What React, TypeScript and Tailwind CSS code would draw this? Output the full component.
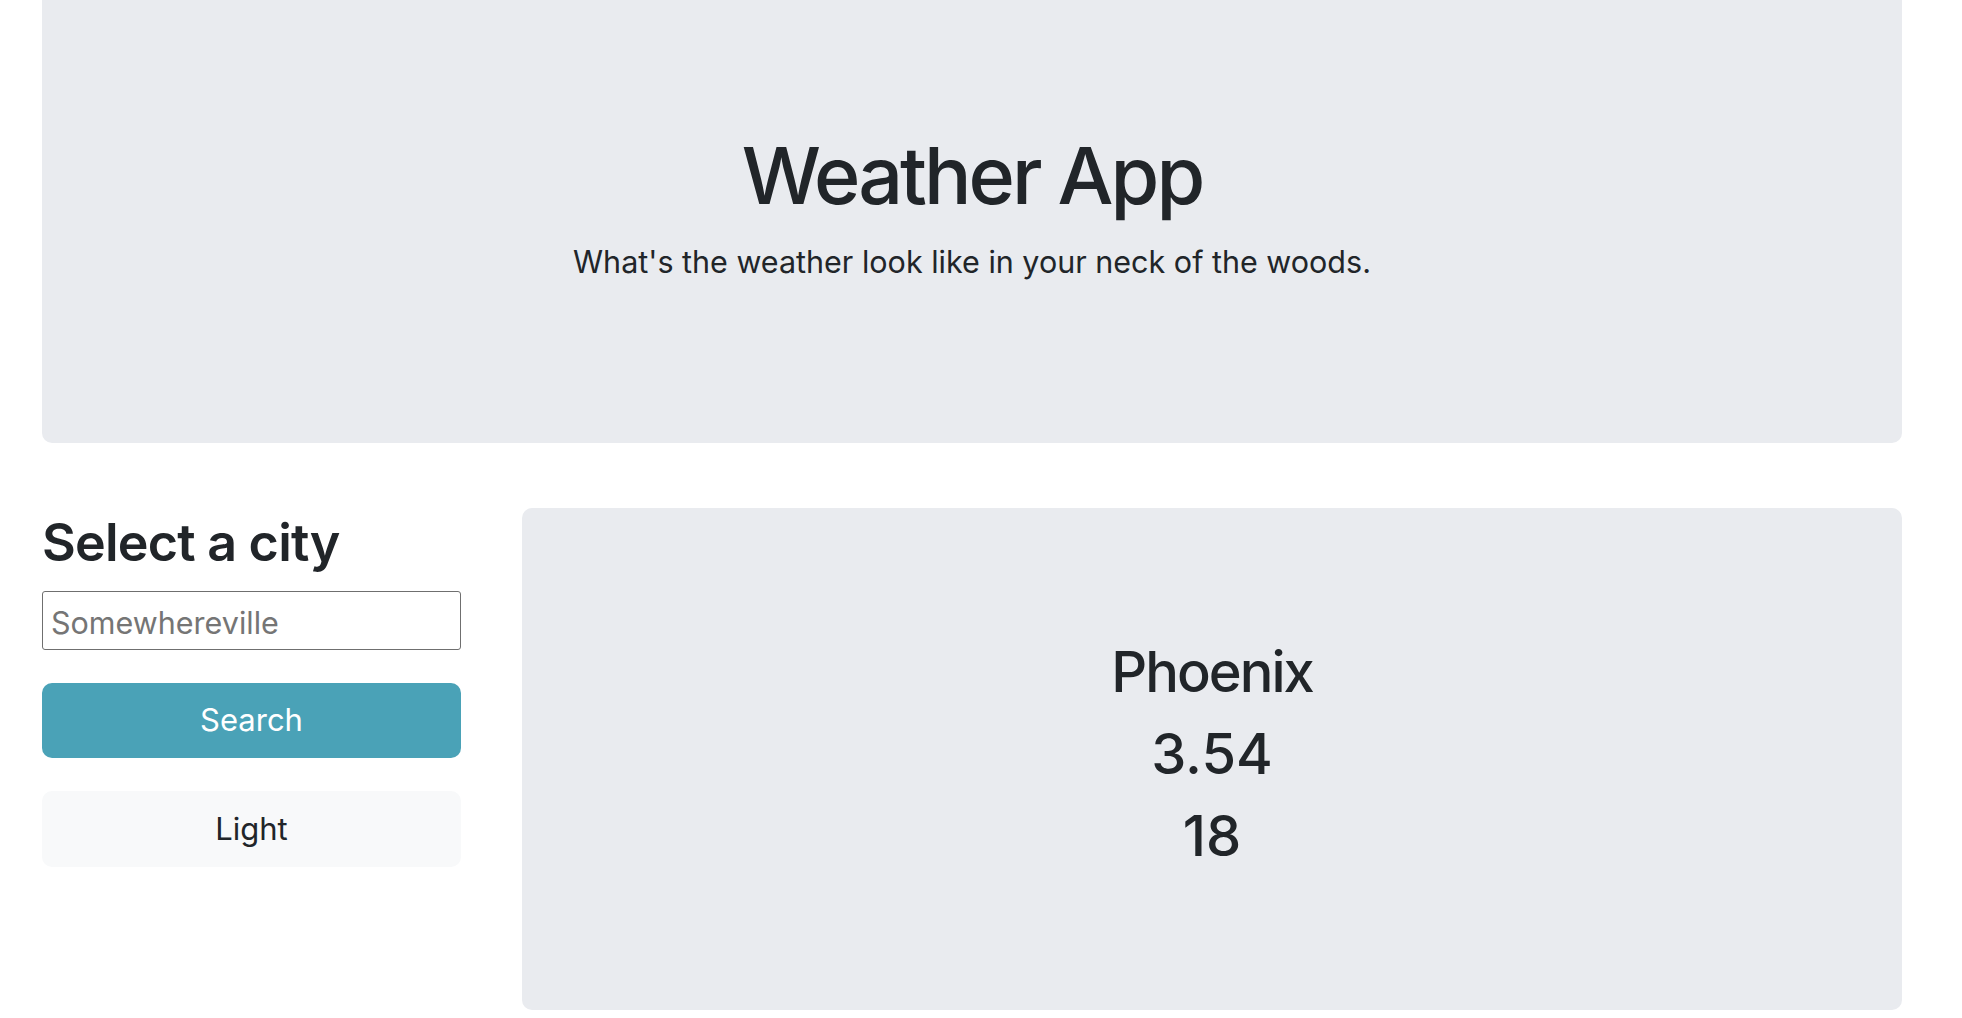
import { useState } from "react";

export default function App() {
  const [city, setCity] = useState("");

  return (
    <div className="min-h-screen bg-white pl-[42px] pr-[60px] font-['Inter','Noto_Sans',sans-serif] text-[#212529]">
      <div className="flex h-[443px] flex-col items-center rounded-b-[10px] bg-[#e9ebef] pt-[127px]">
        <h1 className="text-[79px] leading-[96px] font-medium tracking-[-0.038em]">Weather App</h1>
        <p className="mt-[16px] text-[30.5px] leading-[45px]">
          What's the weather look like in your neck of the woods.
        </p>
      </div>

      <div className="mt-[65px] flex gap-[61px]">
        <div className="w-[419px] shrink-0">
          <h2 className="mt-[4px] text-[52px] leading-[62px] font-semibold tracking-[-0.015em]">
            Select a city
          </h2>
          <input
            value={city}
            onChange={(e) => setCity(e.target.value)}
            placeholder="Somewhereville"
            className="mt-[17px] block h-[59px] w-full rounded-[3px] border border-[#6f6f6f] bg-white px-[8px] pt-[3px] text-[30.5px] text-[#212529] placeholder:text-[#757575] focus:outline-none"
          />
          <button className="mt-[33px] flex h-[75px] w-full items-center justify-center rounded-[10px] bg-[#4aa2b7] text-[31px] text-white">
            Search
          </button>
          <button className="mt-[33px] flex h-[76px] w-full items-center justify-center rounded-[10px] bg-[#f8f9fa] text-[31px] text-[#212529]">
            Light
          </button>
        </div>

        <div className="flex h-[502px] flex-1 flex-col items-center justify-center rounded-[10px] bg-[#e9ebef] pb-[10px] text-[56px] leading-[82px] font-medium">
          <div className="tracking-[-0.035em]">Phoenix</div>
          <div>3.54</div>
          <div>18</div>
        </div>
      </div>
    </div>
  );
}
